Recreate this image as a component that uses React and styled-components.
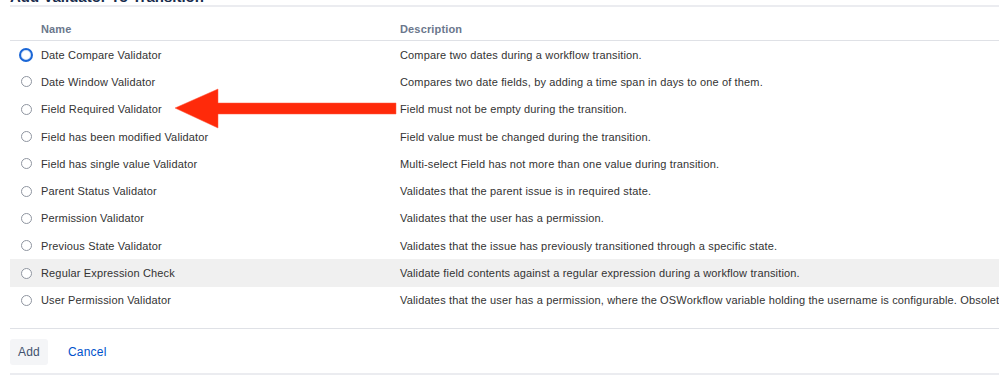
import React from 'react';
import styled, { createGlobalStyle } from 'styled-components';

const GlobalStyle = createGlobalStyle`
  html, body {
    margin: 0;
    padding: 0;
    background: #fff;
    font-family: "Liberation Sans", Arial, sans-serif;
  }
`;

const Page = styled.div`
  position: relative;
  width: 999px;
  height: 381px;
  overflow: hidden;
  padding-left: 10px;
  box-sizing: border-box;
`;

const Heading = styled.h2`
  margin: -11px 0 0;
  padding: 0;
  font-size: 15px;
  line-height: 16px;
  font-weight: 700;
  color: #172b4d;
  border-bottom: 2px solid #ebecf0;
  white-space: nowrap;
`;

const Table = styled.div`
  width: 1100px;
`;

const HeadRow = styled.div`
  display: grid;
  grid-template-columns: 31px 359px 1fr;
  height: 34px;
  align-items: end;
  border-bottom: 1px solid #dfe1e6;
  box-sizing: border-box;
`;

const HeadCell = styled.div`
  font-size: 11px;
  font-weight: 600;
  letter-spacing: 0.15px;
  color: #6b778c;
  padding-bottom: 4px;
  line-height: 14px;
`;

const Row = styled.div`
  display: grid;
  grid-template-columns: 31px 359px 1fr;
  height: 27.3px;
  align-items: center;
  background: ${p => (p.$hover ? '#f0f0f0' : 'transparent')};
`;

const Cell = styled.div`
  font-size: 11px;
  letter-spacing: 0.15px;
  color: #333;
  white-space: nowrap;
  line-height: 14px;
`;

const RadioCell = styled.div`
  display: flex;
  justify-content: center;
  padding-left: 1px;
`;

const Radio = styled.span`
  display: block;
  box-sizing: border-box;
  width: ${p => (p.$checked ? '14px' : '11px')};
  height: ${p => (p.$checked ? '14px' : '11px')};
  border-radius: 50%;
  border: ${p => (p.$checked ? '2.5px solid #1a66d6' : '1px solid #8f95a0')};
  background: #fff;
  box-shadow: ${p => (p.$checked ? 'inset 0 0 0 1px #cfe0f7' : 'none')};
`;

const Footer = styled.div`
  margin-top: 14px;
  border-top: 1px solid #dfe1e6;
  border-bottom: 2px solid #ebecf0;
  padding: 10px 0 8px;
  display: flex;
  align-items: center;
  gap: 20px;
`;

const Button = styled.button`
  font-family: inherit;
  font-size: 12px;
  letter-spacing: 0.2px;
  height: 26px;
  padding: 0 8px;
  border: none;
  border-radius: 3px;
  background: ${p => (p.$link ? 'transparent' : '#f4f5f7')};
  color: ${p => (p.$link ? '#0052cc' : '#42526e')};
  cursor: pointer;
  ${p => p.$link && `padding: 0;`}
`;

const Arrow = styled.svg`
  position: absolute;
  left: 170px;
  top: 86px;
`;

const validators = [
  ['Date Compare Validator', 'Compare two dates during a workflow transition.'],
  ['Date Window Validator', 'Compares two date fields, by adding a time span in days to one of them.'],
  ['Field Required Validator', 'Field must not be empty during the transition.'],
  ['Field has been modified Validator', 'Field value must be changed during the transition.'],
  ['Field has single value Validator', 'Multi-select Field has not more than one value during transition.'],
  ['Parent Status Validator', 'Validates that the parent issue is in required state.'],
  ['Permission Validator', 'Validates that the user has a permission.'],
  ['Previous State Validator', 'Validates that the issue has previously transitioned through a specific state.'],
  ['Regular Expression Check', 'Validate field contents against a regular expression during a workflow transition.'],
  ['User Permission Validator', 'Validates that the user has a permission, where the OSWorkflow variable holding the username is configurable. Obsolete.'],
];

export default function App() {
  return (
    <Page>
      <GlobalStyle />
      <Heading>Add Validator To Transition</Heading>
      <Table>
        <HeadRow>
          <div />
          <HeadCell>Name</HeadCell>
          <HeadCell>Description</HeadCell>
        </HeadRow>
        {validators.map(([name, desc], i) => (
          <Row key={name} $hover={i === 8}>
            <RadioCell>
              <Radio $checked={i === 0} />
            </RadioCell>
            <Cell>{name}</Cell>
            <Cell>{desc}</Cell>
          </Row>
        ))}
      </Table>
      <Footer>
        <Button>Add</Button>
        <Button $link>Cancel</Button>
      </Footer>
      <Arrow width="230" height="46" viewBox="0 0 230 46">
        <path
          d="M5 22 L48 3 L48 17 L226 17 L226 28 L48 28 L48 42 Z"
          fill="#ff2a0a"
          stroke="#ff5a40"
          strokeWidth="0.5"
          strokeLinejoin="miter"
        />
      </Arrow>
    </Page>
  );
}
